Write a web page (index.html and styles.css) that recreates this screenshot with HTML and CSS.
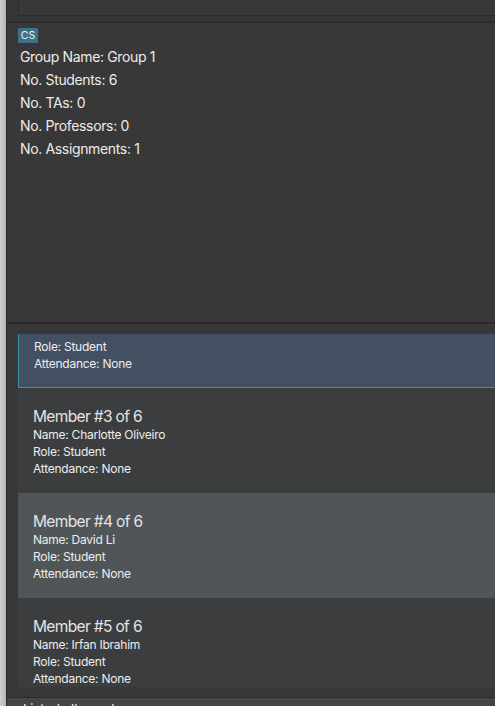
FILE: index.html
```html
<!DOCTYPE html>
<html>
<head>
<meta charset="utf-8">
<link rel="stylesheet" href="styles.css">
</head>
<body>
<div class="window">
  <div class="edge"></div>
  <div class="main">
    <div class="top-area"><div class="top-box"></div></div>
    <div class="sep"></div>
    <div class="info">
      <span class="tag">CS</span>
      <div class="info-lines">
        <div>Group Name: Group 1</div>
        <div>No. Students: 6</div>
        <div>No. TAs: 0</div>
        <div>No. Professors: 0</div>
        <div>No. Assignments: 1</div>
      </div>
    </div>
    <div class="sep"></div>
    <div class="list-panel">
      <div class="viewport">
        <div class="list">
          <div class="card selected">
            <div class="title">Member #2 of 6</div>
            <div class="line">Name: Bernice Yu</div>
            <div class="line">Role: Student</div>
            <div class="line">Attendance: None</div>
          </div>
          <div class="card">
            <div class="title">Member #3 of 6</div>
            <div class="line">Name: Charlotte Oliveiro</div>
            <div class="line">Role: Student</div>
            <div class="line">Attendance: None</div>
          </div>
          <div class="card alt">
            <div class="title">Member #4 of 6</div>
            <div class="line">Name: David Li</div>
            <div class="line">Role: Student</div>
            <div class="line">Attendance: None</div>
          </div>
          <div class="card">
            <div class="title">Member #5 of 6</div>
            <div class="line">Name: Irfan Ibrahim</div>
            <div class="line">Role: Student</div>
            <div class="line">Attendance: None</div>
          </div>
        </div>
      </div>
    </div>
    <div class="sep thin"></div>
    <div class="status">Listed all members</div>
  </div>
</div>
</body>
</html>
```
FILE: styles.css
```css
* { box-sizing: border-box; }
html, body { margin: 0; padding: 0; }
body {
  width: 495px;
  height: 706px;
  overflow: hidden;
  background: #383838;
  font-family: Inter, "Liberation Sans", sans-serif;
  color: #ececec;
}
.window {
  display: flex;
  height: 706px;
  overflow: hidden;
}
.edge {
  width: 7px;
  flex: none;
  background: linear-gradient(to right, #cfcfcf, #b4b4b4 85%, #2b2b2b 85%);
}
.main {
  flex: 1;
  display: flex;
  flex-direction: column;
  min-width: 0;
  overflow: hidden;
}
.main > * { flex-shrink: 0; }
.top-area {
  height: 21px;
  padding-left: 11px;
  background: #363636;
}
.top-box {
  height: 16px;
  border-left: 1px solid #2c2c2c;
  border-bottom: 1px solid #2c2c2c;
  background: #383838;
}
.sep {
  height: 2px;
  background: #2a2a2a;
}
.sep.thin { height: 1px; background: #2c2c2c; }
.info {
  height: 299px;
  padding: 5px 0 0 11px;
  background: #383838;
  display: flex;
  flex-direction: column;
  align-items: flex-start;
}
.tag {
  display: block;
  height: 15px;
  width: 20px;
  background: #3d7187;
  color: #e8eef2;
  font-size: 10.5px;
  line-height: 15px;
  text-align: center;
  border-radius: 1px;
}
.info-lines {
  margin-top: 2px;
  padding-left: 2px;
  font-size: 14px;
  line-height: 23px;
  letter-spacing: -0.35px;
}
.list-panel {
  height: 373px;
  padding: 10px 0 10px 11px;
  background: #383838;
}
.viewport {
  height: 353px;
  margin-right: -4px;
  overflow: hidden;
  background: #3c3d3f;
}
.list {
  margin-top: -51px;
}
.card {
  height: 105px;
  padding: 20px 15px 0;
  background: #3c3d3f;
  color: #ededed;
}
.card.alt { background: #505658; }
.card.selected {
  background: #435062;
  border: 1px solid #3a91aa;
  padding: 19px 15px 0;
}
.title {
  font-size: 15.5px;
  line-height: 18px;
  letter-spacing: -0.65px;
  color: #e4e4e4;
}
.line {
  font-size: 12px;
  line-height: 17px;
  letter-spacing: -0.25px;
}
.status {
  flex: 1 1 auto;
  min-height: 0;
  background: #454545;
  font-size: 13px;
  line-height: 16px;
  padding: 3px 0 0 16px;
  color: #f0f0f0;
  overflow: hidden;
}
```
